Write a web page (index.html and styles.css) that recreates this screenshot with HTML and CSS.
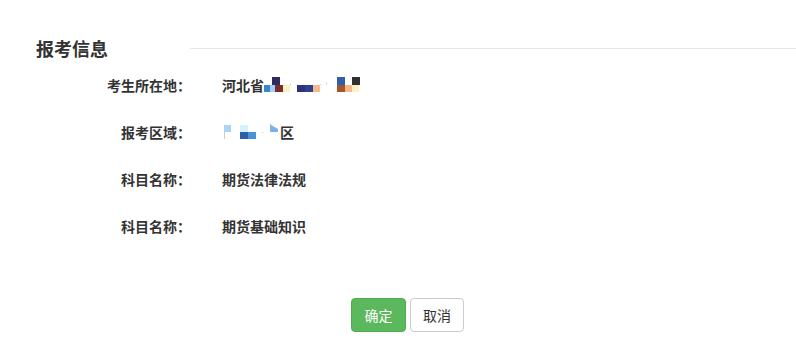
FILE: index.html
```html
<!DOCTYPE html>
<html lang="zh-CN">
<head>
<meta charset="utf-8">
<title>报考信息</title>
<link rel="stylesheet" href="styles.css">
</head>
<body>
<div class="page">
  <div class="header">
    <h2 class="title">报考信息</h2>
    <div class="rule"></div>
  </div>
  <div class="form">
    <div class="row">
      <div class="label">考生所在地：</div>
      <div class="value">河北省<svg class="mosaic" width="100" height="18" viewBox="0 0 100 18">
        <rect x="0" y="9" width="6" height="7" fill="#3b85c8"/>
        <rect x="6" y="9" width="5" height="7" fill="#9fd0f5"/>
        <rect x="8" y="1" width="8" height="8" fill="#2e2b5e"/>
        <rect x="11" y="9" width="8" height="7" fill="#7a2c2c"/>
        <rect x="19" y="9" width="7" height="7" fill="#fbf1c0"/>
        <rect x="26" y="8" width="1" height="1" fill="#bbb"/>
        <rect x="33" y="9" width="8" height="7" fill="#2f3080"/>
        <rect x="41" y="9" width="8" height="7" fill="#30408f"/>
        <rect x="49" y="9" width="7" height="7" fill="#f5b98b"/>
        <rect x="56" y="8" width="1" height="1" fill="#ccc"/>
        <rect x="62" y="6" width="1" height="3" fill="#ddd"/>
        <rect x="73" y="1" width="8" height="8" fill="#2d60a8"/>
        <rect x="73" y="9" width="8" height="7" fill="#a3552e"/>
        <rect x="81" y="9" width="7" height="7" fill="#f5b98b"/>
        <rect x="88" y="1" width="8" height="8" fill="#303030"/>
        <rect x="88" y="9" width="7" height="7" fill="#fbf1c0"/>
      </svg></div>
    </div>
    <div class="row">
      <div class="label">报考区域：</div>
      <div class="value"><svg class="mosaic" width="58" height="18" viewBox="0 0 58 18">
        <rect x="2" y="2" width="7" height="7" fill="#a8d4f8"/>
        <rect x="2" y="9" width="1" height="7" fill="#ccc"/>
        <rect x="18" y="2" width="8" height="7" fill="#d2f2ff"/>
        <rect x="18" y="9" width="8" height="7" fill="#2f5fa8"/>
        <rect x="26" y="9" width="8" height="7" fill="#4a92d2"/>
        <rect x="40" y="9" width="1" height="1" fill="#ccc"/>
        <rect x="48" y="1" width="1" height="8" fill="#8fb8e8"/>
        <polygon points="49,2 56,6 56,9 49,9" fill="#7ab0e8"/>
      </svg>区</div>
    </div>
    <div class="row">
      <div class="label">科目名称：</div>
      <div class="value">期货法律法规</div>
    </div>
    <div class="row">
      <div class="label">科目名称：</div>
      <div class="value">期货基础知识</div>
    </div>
  </div>
  <div class="actions">
    <button class="btn btn-primary" type="button">确定</button>
    <button class="btn btn-default" type="button">取消</button>
  </div>
</div>
</body>
</html>
```
FILE: styles.css
```css
html, body {
  margin: 0;
  padding: 0;
  background: #ffffff;
}
body {
  font-family: "Noto Sans CJK SC", "Liberation Sans", sans-serif;
  color: #333333;
}
.page {
  width: 796px;
}
.header {
  display: flex;
  align-items: center;
  padding: 37px 0 0 36px;
}
.title {
  margin: 0;
  width: 154px;
  flex: none;
  font-size: 18px;
  line-height: 22px;
  font-weight: bold;
  color: #333333;
}
.rule {
  flex: 1;
  height: 0;
  border-top: 1px solid #e8e8ea;
}
.form {
  margin-top: 2px;
}
.row {
  display: flex;
  align-items: center;
  height: 47px;
  font-size: 14px;
  font-weight: bold;
}
.label {
  width: 191px;
  flex: none;
  text-align: right;
}
.value {
  margin-left: 31px;
  display: flex;
  align-items: center;
}
.mosaic {
  display: block;
  flex: none;
}
.actions {
  display: flex;
  justify-content: center;
  gap: 4px;
  padding-left: 19px;
  margin-top: 49px;
}
.btn {
  font-family: "Noto Sans CJK SC", "Liberation Sans", sans-serif;
  font-size: 14px;
  height: 34px;
  width: 55px;
  padding: 0;
  border-radius: 4px;
  border: 1px solid #cccccc;
  cursor: pointer;
}
.btn-primary {
  background: #5cb85c;
  border-color: #4cae4c;
  color: #ffffff;
}
.btn-default {
  width: 54px;
  background: #ffffff;
  color: #333333;
}
```
